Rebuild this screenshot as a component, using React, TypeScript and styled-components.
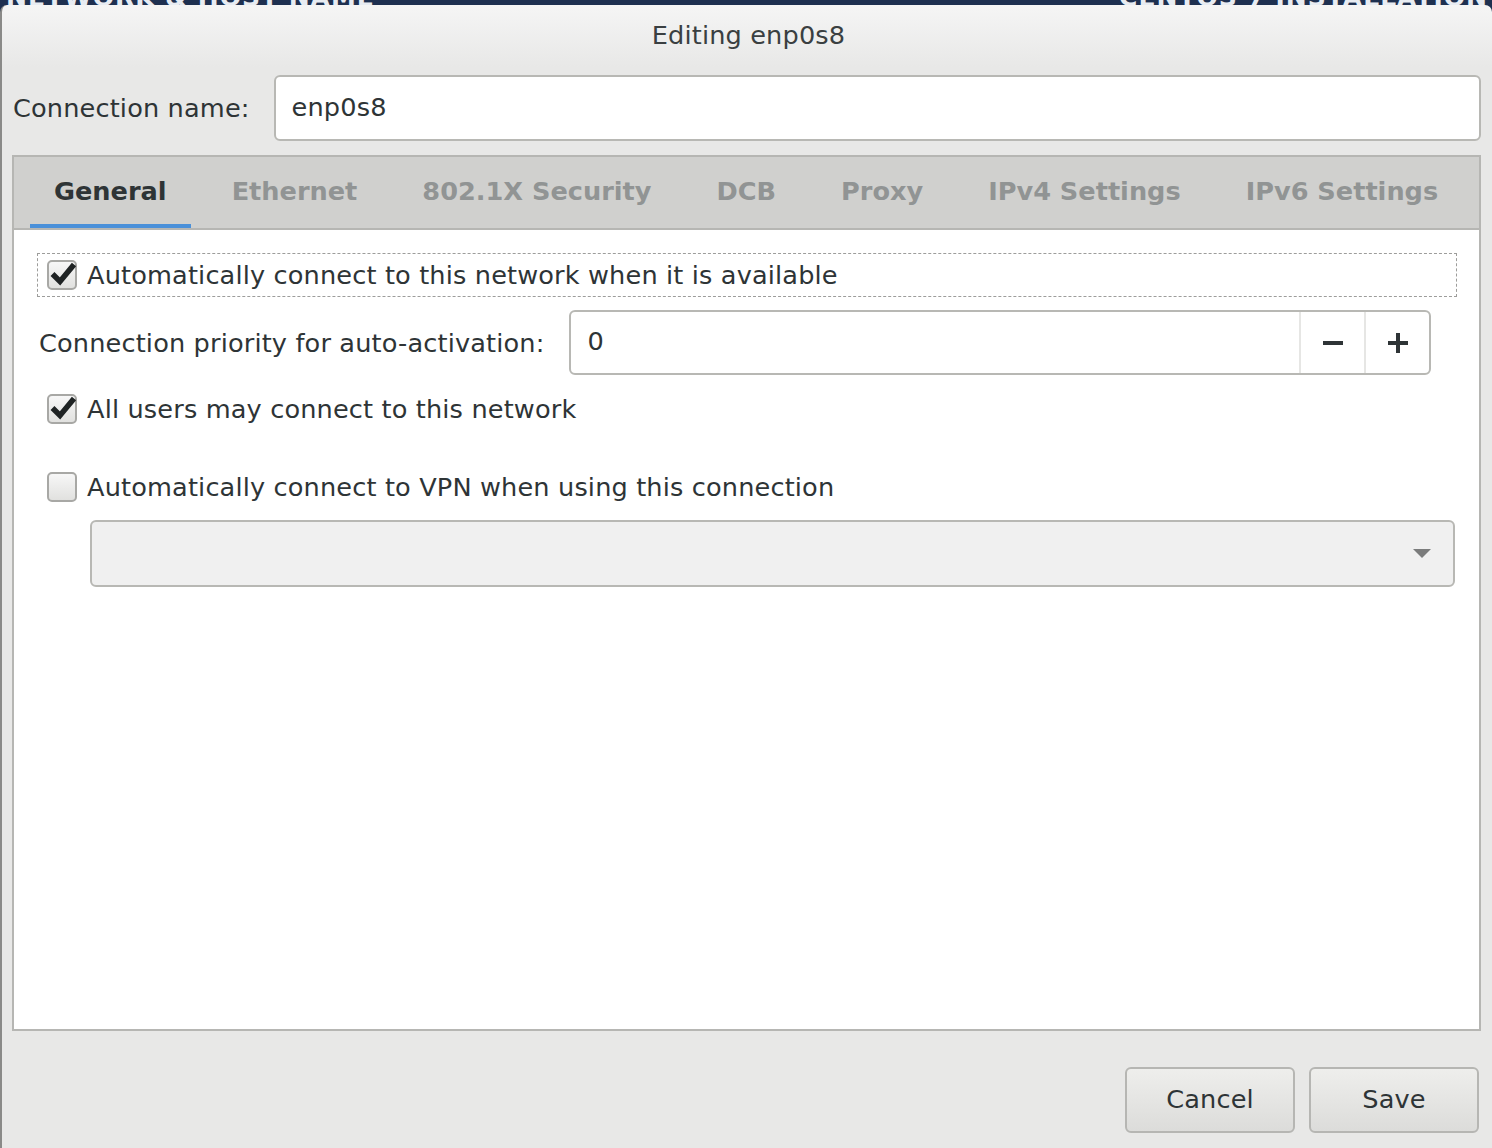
import React from "react"
import styled, { createGlobalStyle } from "styled-components"

// styles
const GlobalStyle = createGlobalStyle`
  html, body {
    margin: 0;
    padding: 0;
    background: #1e3050;
  }

  body {
    font-family: "DejaVu Sans", "Liberation Sans", sans-serif;
    font-size: 25.6px;
    letter-spacing: 0.15px;
    color: #2e3436;
  }

  * {
    box-sizing: border-box;
  }
`

const Page = styled.div`
  width: 1492px;
  height: 1148px;
  display: flex;
  flex-direction: column;
  overflow: hidden;
`

const BackdropStrip = styled.div`
  height: 5px;
  flex: none;
  display: flex;
  justify-content: space-between;
  align-items: flex-end;
  overflow: hidden;
  padding: 0 4px 0 6px;
`

const StripText = styled.span`
  color: #e8ecf2;
  font-weight: bold;
  font-size: 25px;
  line-height: 1;
  letter-spacing: 1px;
  margin-bottom: -5px;
  white-space: nowrap;
`

const Dialog = styled.div`
  flex: 1;
  display: flex;
  flex-direction: column;
  border-left: 2px solid #8a8a88;
  border-radius: 7px 7px 0 0;
  background: linear-gradient(#f5f5f5, #e8e8e7 62px);
  padding: 0 11px 15px 10px;
`

const TitleBar = styled.div`
  height: 60px;
  flex: none;
  display: flex;
  align-items: center;
  justify-content: center;
  color: #3a3f41;
  padding-left: 4px;
`

const NameRow = styled.div`
  display: flex;
  align-items: center;
  height: 66px;
  margin-top: 10px;
  margin-bottom: 14px;
`

const FieldLabel = styled.span`
  padding-left: 1px;
  white-space: nowrap;
`

const TextEntry = styled.div`
  flex: 1;
  height: 66px;
  margin-left: 24px;
  background: #ffffff;
  border: 2px solid #b8b8b4;
  border-radius: 6px;
  display: flex;
  align-items: center;
  padding-left: 16px;
  padding-bottom: 2px;
`

const Notebook = styled.div`
  flex: 1;
  display: flex;
  flex-direction: column;
  border: 2px solid #b6b6b3;
  min-height: 0;
`

const TabBar = styled.div`
  height: 73px;
  flex: none;
  display: flex;
  gap: 17px;
  padding-left: 16px;
  background: #d0d0ce;
  border-bottom: 2px solid #b6b6b3;
`

const Tab = styled.div<{ $active?: boolean }>`
  height: 71px;
  padding: 0 24px;
  display: flex;
  align-items: center;
  font-weight: bold;
  letter-spacing: 0;
  white-space: nowrap;
  color: ${({ $active }) => ($active ? "#2e3436" : "#919494")};
  border-bottom: 4px solid ${({ $active }) => ($active ? "#4a90d9" : "transparent")};
  padding-top: 1px;
`

const TabPanel = styled.div`
  flex: 1;
  background: #ffffff;
  display: flex;
  flex-direction: column;
  padding: 23px 22px 0 23px;
`

const CheckRow = styled.div<{ $focused?: boolean; $gap?: number }>`
  height: 44px;
  display: flex;
  align-items: center;
  gap: 10px;
  padding-left: 9px;
  border: 1px dashed ${({ $focused }) => ($focused ? "#9d9d9b" : "transparent")};
  margin-top: ${({ $gap }) => $gap ?? 0}px;
`

const CheckBox = styled.span`
  width: 30px;
  height: 30px;
  flex: none;
  border: 2px solid #a8a8a5;
  border-radius: 5px;
  background: linear-gradient(#f7f7f7, #e1e1df);
  display: flex;
  align-items: center;
  justify-content: center;
`

const SpinRow = styled.div`
  display: flex;
  align-items: center;
  height: 65px;
  margin-top: 13px;
  padding-left: 1px;
  margin-right: 26px;
`

const SpinBox = styled.div`
  flex: 1;
  height: 65px;
  margin-left: 25px;
  display: flex;
  border: 2px solid #b8b8b4;
  border-radius: 6px;
  background: #ffffff;
`

const SpinValue = styled.div`
  flex: 1;
  display: flex;
  align-items: center;
  padding-left: 16px;
  padding-bottom: 3px;
`

const SpinButton = styled.div<{ $w: number }>`
  width: ${({ $w }) => $w}px;
  display: flex;
  align-items: center;
  justify-content: center;
  border-left: 2px solid #e6e6e4;
`

const Combo = styled.div`
  height: 67px;
  margin: 11px 2px 0 53px;
  background: #f0f0f0;
  border: 2px solid #b8b8b4;
  border-radius: 6px;
  display: flex;
  align-items: center;
  justify-content: flex-end;
  padding-right: 22px;
`

const ButtonRow = styled.div`
  flex: none;
  display: flex;
  justify-content: flex-end;
  gap: 14px;
  margin-top: 36px;
  padding-right: 2px;
`

const DialogButton = styled.div`
  width: 170px;
  height: 66px;
  display: flex;
  align-items: center;
  justify-content: center;
  padding-bottom: 2px;
  border: 2px solid #b6b6b3;
  border-radius: 6px;
  background: linear-gradient(#eeeeec, #dcdcda);
  color: #2e3436;
`

const tabs = [
  "General",
  "Ethernet",
  "802.1X Security",
  "DCB",
  "Proxy",
  "IPv4 Settings",
  "IPv6 Settings",
]

function Check({ checked }: { checked?: boolean }) {
  return (
    <CheckBox>
      {checked && (
        <svg width="30" height="30" viewBox="0 0 30 30" style={{ marginRight: -4 }}>
          <path
            d="M3.5 14 L11 21.5 L25 4.5"
            fill="none"
            stroke="#1f2324"
            strokeWidth="5.5"
          />
        </svg>
      )}
    </CheckBox>
  )
}

export default function App() {
  return (
    <Page>
      <GlobalStyle />
      <BackdropStrip>
        <StripText>NETWORK &amp; HOST NAME</StripText>
        <StripText>CENTOS 7 INSTALLATION</StripText>
      </BackdropStrip>
      <Dialog>
        <TitleBar>Editing enp0s8</TitleBar>
        <NameRow>
          <FieldLabel>Connection name:</FieldLabel>
          <TextEntry>enp0s8</TextEntry>
        </NameRow>

        <Notebook>
          <TabBar>
            {tabs.map((t, i) => (
              <Tab key={t} $active={i === 0}>
                {t}
              </Tab>
            ))}
          </TabBar>
          <TabPanel>
            <CheckRow $focused>
              <Check checked />
              <span>Automatically connect to this network when it is available</span>
            </CheckRow>

            <SpinRow>
              <FieldLabel>Connection priority for auto-activation:</FieldLabel>
              <SpinBox>
                <SpinValue>0</SpinValue>
                <SpinButton $w={65}>
                  <svg width="20" height="20" viewBox="0 0 20 20">
                    <rect x="0" y="8" width="20" height="4" fill="#2e3436" />
                  </svg>
                </SpinButton>
                <SpinButton $w={65}>
                  <svg width="20" height="20" viewBox="0 0 20 20">
                    <rect x="0" y="8" width="20" height="4" fill="#2e3436" />
                    <rect x="8" y="0" width="4" height="20" fill="#2e3436" />
                  </svg>
                </SpinButton>
              </SpinBox>
            </SpinRow>

            <CheckRow $gap={12}>
              <Check checked />
              <span>All users may connect to this network</span>
            </CheckRow>

            <CheckRow $gap={34}>
              <Check />
              <span>Automatically connect to VPN when using this connection</span>
            </CheckRow>

            <Combo>
              <svg width="18" height="9" viewBox="0 0 18 9">
                <polygon points="0,0 18,0 9,9" fill="#7b7c7c" />
              </svg>
            </Combo>
          </TabPanel>
        </Notebook>

        <ButtonRow>
          <DialogButton>Cancel</DialogButton>
          <DialogButton>Save</DialogButton>
        </ButtonRow>
      </Dialog>
    </Page>
  )
}
